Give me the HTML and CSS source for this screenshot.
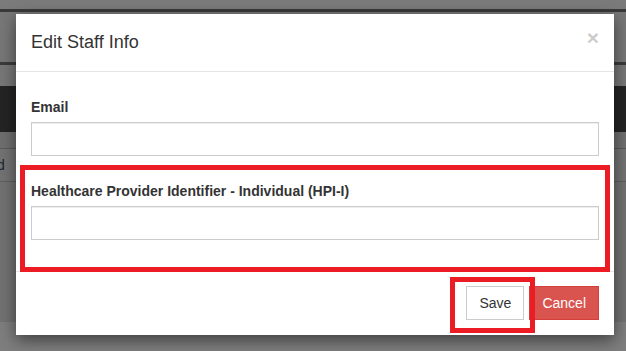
FILE: index.html
```html
<!DOCTYPE html>
<html>
<head>
<meta charset="utf-8">
<link rel="stylesheet" href="styles.css">
</head>
<body>
<div class="page">
  <div class="bg b1"></div>
  <div class="bg b2"></div>
  <div class="bg b3"></div>
  <div class="bg b4"></div>
  <div class="bg b5"></div>
  <div class="bg b6"></div>
  <div class="bg b7"></div>
  <div class="bg line"></div>
  <div class="bg b8"><span class="cell">d</span></div>
  <div class="bg line2"></div>
  <div class="bg b9"></div>
  <div class="bg b10"></div>

  <div class="modal">
    <div class="modal-header">
      <h4 class="modal-title">Edit Staff Info</h4>
      <span class="close">×</span>
    </div>
    <div class="modal-body">
      <div class="form-group">
        <label class="label">Email</label>
        <div class="input"></div>
      </div>
      <div class="form-group last">
        <label class="label">Healthcare Provider Identifier - Individual (HPI-I)</label>
        <div class="input"></div>
      </div>
    </div>
    <div class="modal-footer">
      <span class="btn btn-default">Save</span>
      <span class="btn btn-danger">Cancel</span>
    </div>
  </div>

  <div class="mark mark-field"></div>
  <div class="mark mark-save"></div>
</div>
</body>
</html>
```
FILE: styles.css
```css
* { box-sizing: border-box; }
html, body { margin: 0; padding: 0; }
body {
  width: 626px;
  height: 351px;
  overflow: hidden;
  font-family: "Liberation Sans", Arial, sans-serif;
  color: #333;
  background: #7e7e7e;
}
.page { position: relative; width: 626px; height: 351px; }
.bg { width: 100%; }
.b1 { height: 9px; background: #7b7b7b; }
.b2 { height: 3px; background: #3a3a3a; }
.b3 { height: 50px; background: #777; }
.b4 { height: 3px; background: #3b3b3b; }
.b5 { height: 21px; background: #777; }
.b6 { height: 46px; background: #242424; }
.b7 { height: 16px; background: #6f6f6f; }
.line { height: 1px; background: #5a5a5a; }
.b8 {
  height: 32px;
  background: #737373;
  font-size: 14px;
  line-height: 32px;
  color: #1c2430;
}
.cell { display: inline-block; margin-left: -3px; }
.line2 { height: 1px; background: #5e5e5e; }
.b9 { height: 140px; background: #727272; }
.b10 { height: 29px; background: #7e7e7e; }

.modal {
  position: absolute;
  left: 16px;
  top: 14px;
  width: 598px;
  background: #fff;
  box-shadow: 0 5px 15px rgba(0, 0, 0, 0.5);
}
.modal-header {
  display: flex;
  justify-content: space-between;
  align-items: flex-start;
  padding: 15px;
  border-bottom: 1px solid #e5e5e5;
  height: 58px;
}
.modal-title {
  margin: 0;
  font-size: 18px;
  font-weight: normal;
  line-height: 27px;
  color: #333;
}
.close {
  font-size: 21px;
  font-weight: bold;
  line-height: 1;
  margin-top: -2px;
  color: #000;
  opacity: 0.2;
  text-shadow: 0 1px 0 #fff;
}
.modal-body {
  padding: 25px 15px 31px;
}
.form-group { margin-bottom: 25px; }
.form-group.last { margin-bottom: 0; }
.label {
  display: block;
  font-size: 14px;
  font-weight: bold;
  line-height: 20px;
  margin-bottom: 5px;
  color: #333;
}
.input {
  height: 34px;
  border: 1px solid #ccc;
  background: #fff;
  box-shadow: inset 0 1px 1px rgba(0, 0, 0, 0.075);
}
.modal-footer {
  display: flex;
  justify-content: flex-end;
  gap: 5px;
  border-top: 1px solid #e5e5e5;
  padding: 14px 15px 15px;
}
.btn {
  display: inline-block;
  height: 34px;
  padding: 0 12px;
  font-size: 14px;
  line-height: 32px;
  border: 1px solid transparent;
}
.btn-default { background: #fff; border-color: #ccc; color: #333; }
.btn-danger { background: #d9534f; border-color: #d43f3a; color: #fff; }

.mark {
  position: absolute;
  border: 5px solid #ec1c24;
}
.mark-field { left: 20px; top: 165px; width: 590px; height: 107px; }
.mark-save { left: 450px; top: 277px; width: 85px; height: 56px; }
```
